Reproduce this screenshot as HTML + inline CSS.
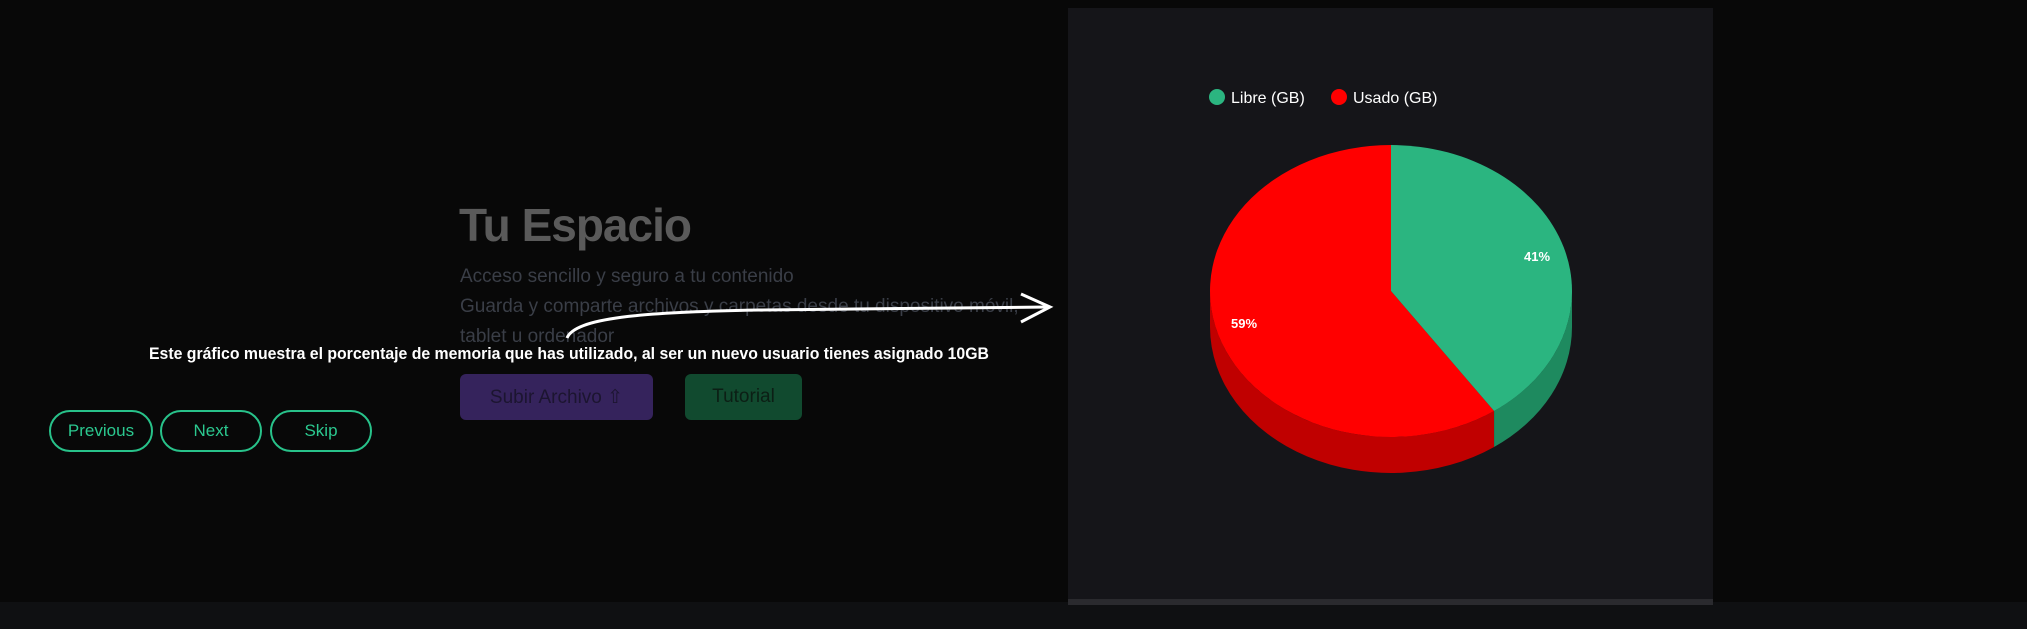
<!DOCTYPE html>
<html><head><meta charset="utf-8"><style>
body{margin:0;width:2027px;height:629px;background:#080808;position:relative;overflow:hidden;font-family:"Liberation Sans",sans-serif}
.abs{position:absolute}
.nav{position:absolute;top:410px;height:38px;border:2px solid #28c28a;border-radius:22px;color:#2bc88f;font-size:17px;display:flex;align-items:center;justify-content:center;box-sizing:content-box}
</style></head><body>
<div class="abs" style="left:0;top:602px;width:2027px;height:27px;background:#0f1012"></div>
<div class="abs" style="left:1068px;top:8px;width:645px;height:597px;background:#151519"></div>
<div class="abs" style="left:1068px;top:599px;width:645px;height:6px;background:#2a2a2e"></div>

<div class="abs" style="left:459px;top:198px;font-size:46px;font-weight:bold;color:#5a5a5a;letter-spacing:-1px">Tu Espacio</div>
<div class="abs" style="left:460px;top:262px;font-size:19px;color:#3a3e47;line-height:30px">Acceso sencillo y seguro a tu contenido<br>Guarda y comparte archivos y carpetas desde tu dispositivo móvil,<br>tablet u ordenador</div>
<div class="abs" style="left:460px;top:374px;width:193px;height:46px;background:#35235c;border-radius:6px;color:#1c1530;font-size:19px;display:flex;align-items:center;justify-content:center">Subir Archivo ⇧</div>
<div class="abs" style="left:685px;top:374px;width:117px;height:46px;background:#114a2f;border-radius:6px;color:#0c1f15;font-size:19px;display:flex;align-items:center;justify-content:center">Tutorial</div>

<div class="abs" style="left:149px;top:344px;font-size:17px;color:#fff;font-weight:bold;white-space:nowrap;transform:scaleX(0.93);transform-origin:left top">Este gráfico muestra el porcentaje de memoria que has utilizado, al ser un nuevo usuario tienes asignado 10GB</div>

<svg class="abs" style="left:0;top:0" width="2027" height="629">
<path d="M567 338 C575 318 640 312 760 310 C880 308 980 307 1048 307" stroke="#fff" stroke-width="3" fill="none"/>
<path d="M1021 294 L1050 307 L1021 322" stroke="#fff" stroke-width="3" fill="none"/>
<path d="M1210 291 L1210 327 A181 146 0 0 0 1494.1 447 L1494.1 411 A181 146 0 0 1 1210 291 Z" fill="#c00000"/>
<path d="M1494.1 411 L1494.1 447 A181 146 0 0 0 1572 327 L1572 291 A181 146 0 0 1 1494.1 411 Z" fill="#1e8a5f"/>
<path d="M1391 291 L1391 145 A181 146 0 1 0 1494.1 411 Z" fill="#ff0000"/>
<path d="M1391 291 L1391 145 A181 146 0 0 1 1494.1 411 Z" fill="#2bb580"/>
<text x="1537" y="261" fill="#fff" font-size="13" font-weight="bold" text-anchor="middle" font-family="Liberation Sans">41%</text>
<text x="1244" y="328" fill="#fff" font-size="13" font-weight="bold" text-anchor="middle" font-family="Liberation Sans">59%</text>
<circle cx="1217" cy="97" r="8" fill="#2bb580"/>
<text x="1231" y="103" fill="#fff" font-size="16" font-family="Liberation Sans">Libre (GB)</text>
<circle cx="1339" cy="97" r="8" fill="#ff0000"/>
<text x="1353" y="103" fill="#fff" font-size="16" font-family="Liberation Sans">Usado (GB)</text>
</svg>

<div class="nav" style="left:49px;width:100px">Previous</div>
<div class="nav" style="left:160px;width:98px">Next</div>
<div class="nav" style="left:270px;width:98px">Skip</div>
</body></html>
